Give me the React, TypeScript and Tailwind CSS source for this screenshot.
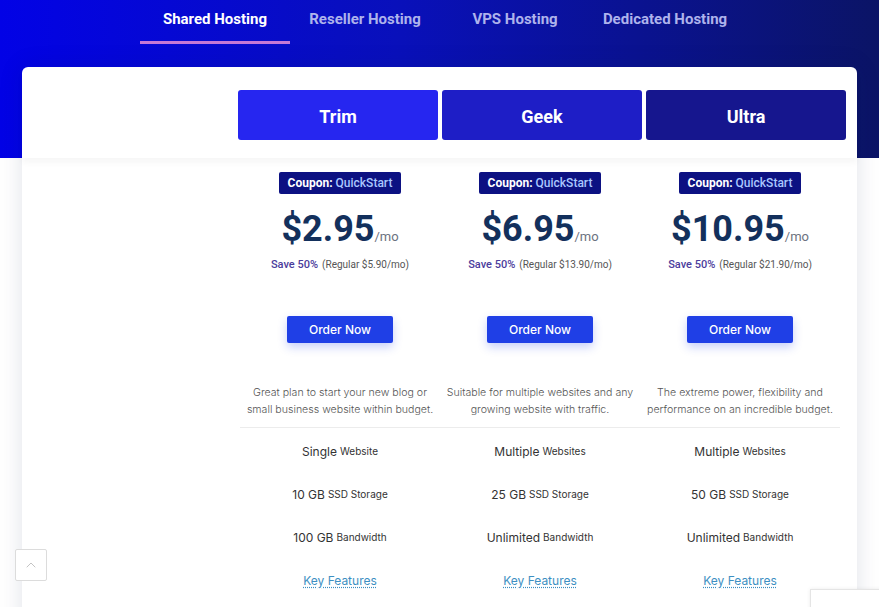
import { ChevronUp } from "lucide-react"

const tabs = ["Shared Hosting", "Reseller Hosting", "VPS Hosting", "Dedicated Hosting"]

const plans = [
  {
    name: "Trim",
    head: "bg-[#2626f0]",
    price: "$2.95",
    regular: "$5.90",
    desc: ["Great plan to start your new blog or", "small business website within budget."],
    sites: ["Single", "Website"],
    storage: "10 GB",
    bandwidth: "100 GB",
  },
  {
    name: "Geek",
    head: "bg-[#1e1ec6]",
    price: "$6.95",
    regular: "$13.90",
    desc: ["Suitable for multiple websites and any", "growing website with traffic."],
    sites: ["Multiple", "Websites"],
    storage: "25 GB",
    bandwidth: "Unlimited",
  },
  {
    name: "Ultra",
    head: "bg-[#16168e]",
    price: "$10.95",
    regular: "$21.90",
    desc: ["The extreme power, flexibility and", "performance on an incredible budget."],
    sites: ["Multiple", "Websites"],
    storage: "50 GB",
    bandwidth: "Unlimited",
  },
]

const PlanBody = ({ plan }: any) => {
  return (
    <div className="flex flex-col items-center">
      <div className="mt-[14px] h-[22px] w-[122px] rounded-[2px] bg-[#0c1182] flex items-center justify-center text-[12px] font-['Roboto',sans-serif]">
        <span className="font-bold text-white">Coupon:</span>
        <span className="ml-[3px] font-medium text-[#a9c6ff]">QuickStart</span>
      </div>
      <div className="mt-[14px] flex items-baseline font-['Roboto',sans-serif]">
        <span className="text-[36px] leading-[42px] font-bold text-[#13305c]">{plan.price}</span>
        <span className="text-[13px] text-[#6b7280]">/mo</span>
      </div>
      <div className="mt-[6px] leading-[14px] font-['Roboto',sans-serif]">
        <span className="text-[11px] text-[#4b3c9c] font-medium">Save 50%</span>
        <span className="ml-[4px] text-[10px] text-[#555]">(Regular {plan.regular}/mo)</span>
      </div>
      <button className="mt-[44px] h-[27px] w-[106px] rounded-[2px] bg-[#1f3fe6] text-white text-[12px] font-medium font-['Inter',sans-serif] shadow-[0_4px_10px_rgba(31,63,230,0.25)]">
        Order Now
      </button>
      <div className="mt-[41px] text-center text-[10.6px] leading-[17px] text-[#555] font-['Inter',sans-serif] font-light">
        {plan.desc.map((line: string) => (
          <div key={line}>{line}</div>
        ))}
      </div>
    </div>
  )
}

const Feature = ({ big, small }: any) => {
  return (
    <div className="h-[43px] flex items-center justify-center text-[#333] font-['Inter',sans-serif]">
      <span className="text-[12px]">{big}</span>
      <span className="ml-[3px] text-[10px]">{small}</span>
    </div>
  )
}

export default function App() {
  return (
    <div className="relative h-[607px] overflow-hidden bg-white bg-[linear-gradient(90deg,#0202e6_0%,#0910bb_45%,#0b1466_100%)] bg-no-repeat bg-[length:100%_158px]">
      <nav className="h-[67px] flex pl-[140px] font-['Roboto',sans-serif]">
        {tabs.map((tab, i) => (
          <div key={tab} className="w-[150px] h-[44px] flex flex-col items-center justify-between">
            <span className={"pt-[9px] text-[15px] leading-[20px] font-bold " + (i === 0 ? "text-white" : "text-[#aeb3ec]")}>
              {tab}
            </span>
            {i === 0 && <span className="h-[3px] w-full bg-[#c578d6]" />}
          </div>
        ))}
      </nav>

      <div className="mx-[22px] min-h-[700px] rounded-t-[6px] bg-white shadow-[0_0_24px_rgba(20,30,80,0.12)]">
        <div className="h-[91px] pt-[23px] pr-[11px] grid grid-cols-[200px_200px_200px_200px] gap-x-1 pl-[12px] rounded-t-[6px] shadow-[0_5px_6px_rgba(0,0,0,0.035)]">
          <div />
          {plans.map((plan) => (
            <div
              key={plan.name}
              className={"h-[50px] pt-[2px] rounded-[3px] flex items-center justify-center text-white text-[18px] font-bold font-['Roboto',sans-serif] " + plan.head}
            >
              {plan.name}
            </div>
          ))}
        </div>

        <div className="grid grid-cols-[200px_200px_200px_200px] pl-[18px]">
          <div />
          {plans.map((plan) => (
            <PlanBody key={plan.name} plan={plan} />
          ))}
        </div>

        <div className="ml-[218px] mr-[17px] mt-[9px] h-px bg-[#ececec]" />

        <div className="pt-[2px] grid grid-cols-[200px_200px_200px_200px] pl-[18px]">
          <div />
          {plans.map((plan) => (
            <div key={plan.name} className="flex flex-col">
              <Feature big={plan.sites[0]} small={plan.sites[1]} />
              <Feature big={plan.storage} small="SSD Storage" />
              <Feature big={plan.bandwidth} small="Bandwidth" />
              <div className="h-[43px] flex items-center justify-center">
                <a className="text-[12px] text-[#3d8fc2] font-['Inter',sans-serif] underline decoration-dotted underline-offset-2">
                  Key Features
                </a>
              </div>
            </div>
          ))}
        </div>
      </div>

      <button className="absolute left-[15px] top-[549px] h-[32px] w-[32px] rounded-[2px] border border-[#dcdcdc] bg-white flex items-center justify-center text-[#c4c4c4]">
        <ChevronUp size={16} strokeWidth={1.5} />
      </button>

      <div className="absolute left-[810px] top-[589px] h-[40px] w-[80px] bg-white border-l border-t border-[#e5e5e5] shadow-[0_0_4px_rgba(0,0,0,0.08)]" />
    </div>
  )
}
